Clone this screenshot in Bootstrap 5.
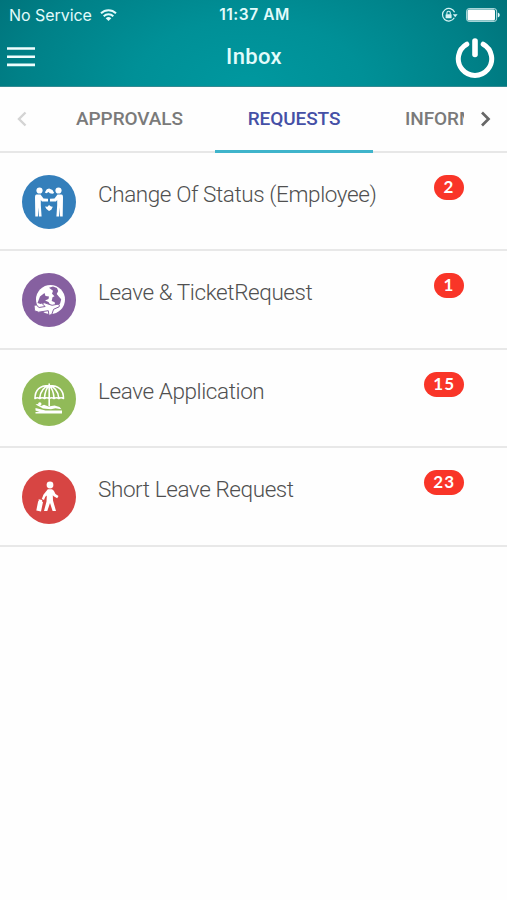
<!DOCTYPE html>
<html lang="en">
<head>
<meta charset="utf-8">
<meta name="viewport" content="width=device-width, initial-scale=1">
<title>Inbox</title>
<link href="https://cdn.jsdelivr.net/npm/bootstrap@5.3.0/dist/css/bootstrap.min.css" rel="stylesheet">
<style>
body{font-family:Roboto,sans-serif;background:#fefefe;overflow:hidden}
svg{display:block;flex:none}
.app-header{height:87px;background:radial-gradient(ellipse 330px 190px at 49% 100%,#00989f 0%,#009097 35%,#008087 70%,#006c74 100%);color:#e2fbfb;border-bottom:1px solid #348a92}
.status-row{height:30px;font:400 16px/30px Inter,sans-serif;padding:0 7px 0 9px}
.status-row>div,.title-row>div{flex:1 1 0}
.carrier{letter-spacing:-.05px}
.clock{font-weight:600;font-size:15.5px;letter-spacing:.55px}
.title-row{height:56px;padding:0 12px 0 13px}
.title-row>div:first-child{margin-left:-6px;margin-right:6px}
.title-row h1{font-size:22px;font-weight:500;line-height:54px;margin:0 0 2px;letter-spacing:.35px}
.tab-strip{height:66px;border-bottom:2px solid #e7e7e7}
.tab-strip .arrow{width:43px}
.tab-strip .nav{flex:1;min-width:0;overflow:hidden;height:66px;margin-left:1px}
.tab-strip .nav-link{font-size:19px;font-weight:500;letter-spacing:-.08px;color:#7a7a7a;line-height:28px;padding:18px 0 17px;border-radius:0;border-bottom:3px solid transparent;height:66px;flex:none;text-align:center}
.tab-strip .nav-link.active{color:#4550a6;border-color:#3fb4cb}
.t1{width:171px}.t2{width:158px}.t3{width:190px;padding-left:32px!important;text-align:left!important}
.request{height:98.4px;border-bottom:2px solid #e8e8e8;padding:22px 43px 0 22px}
.round-icon{width:54px;height:54px}
.label-text{font-weight:300;font-size:22.5px;line-height:28px;color:#505050;margin:5px 0 0 22px;letter-spacing:-.41px}
.count{background:#f93528;font:700 17px/24px Lato,sans-serif;min-width:30px;height:25px;padding:0 9px;border-radius:13px;letter-spacing:1px}
</style>
</head>
<body>
<header class="app-header">
  <div class="status-row d-flex align-items-center">
    <div class="d-flex align-items-center gap-2 text-nowrap"><span class="carrier">No Service</span>
      <svg width="17" height="13" viewBox="0 0 17 13" fill="none" stroke="#e2fbfb" stroke-width="2"><path d="M1 4.300C5.200.2 11.800.2 16 4.300M3.700 7.200C6.300 4.700 10.700 4.700 13.300 7.200"/><path d="M8.500 12L5.700 9.200Q8.500 6.900 11.300 9.200Z" fill="#e2fbfb" stroke="none"/></svg>
    </div>
    <span class="clock">11:37 AM</span>
    <div class="d-flex align-items-center justify-content-end gap-2">
      <svg width="17" height="16" viewBox="0 0 17 16"><path d="M13.300 10.800A6.300 6.300 0 1 1 13.600 5.300" fill="none" stroke="#d5f3f4" stroke-width="1.200"/><path d="M11.800 7.300h4.800l-2.400 3z" fill="#d5f3f4"/><rect x="4.600" y="7.300" width="6" height="4" rx=".5" fill="#d5f3f4"/><path d="M5.900 7.500V6a1.700 1.700 0 0 1 3.400 0v1.500" fill="none" stroke="#d5f3f4" stroke-width="1.100"/></svg>
      <svg width="34" height="14" viewBox="0 0 34 14"><rect x=".6" y=".6" width="30" height="12.800" rx="2.500" fill="none" stroke="#b9e0e2"/><rect x="1.500" y="1.500" width="27.500" height="11" rx="1.500" fill="#fff"/><path d="M31.800 4.500q2 .6 2 2.500t-2 2.500z" fill="#e2fbfb"/></svg>
    </div>
  </div>
  <div class="title-row d-flex align-items-center">
    <div><svg width="28" height="24" viewBox="0 0 28 24" stroke="#effefe" stroke-width="2.600"><path d="M0 2.500h28M0 10.700h28M0 18.900h28"/></svg></div>
    <h1>Inbox</h1>
    <div class="d-flex justify-content-end"><svg width="40" height="43" viewBox="0 0 40 43" fill="none" stroke="#fff" stroke-linecap="round"><path d="M11.800 7.200A16.700 16.700 0 1 0 28.200 7.200" stroke-width="5"/><path d="M20 4v13.500" stroke-width="5.600"/></svg></div>
  </div>
</header>
<nav class="tab-strip d-flex">
  <div class="arrow d-flex align-items-center justify-content-center"><svg width="12" height="16" viewBox="0 0 12 16" fill="none" stroke="#d4d4d4" stroke-width="2.400"><path d="M9.500 1.500L3 8l6.500 6.500"/></svg></div>
  <div class="nav flex-nowrap">
    <a class="nav-link t1" href="#">APPROVALS</a>
    <a class="nav-link t2 active" href="#">REQUESTS</a>
    <a class="nav-link t3" href="#">INFORMATION</a>
  </div>
  <div class="arrow d-flex align-items-center justify-content-center"><svg width="12" height="16" viewBox="0 0 12 16" fill="none" stroke="#676767" stroke-width="2.700"><path d="M2 1.500L8.500 8 2 14.500"/></svg></div>
</nav>
<main>
  <div class="request d-flex align-items-start">
    <svg class="round-icon" viewBox="0 0 54 54"><circle cx="27" cy="27" r="27" fill="#347fbb"/><g fill="#fff"><circle cx="17.500" cy="15.500" r="3.100"/><circle cx="36.500" cy="15.500" r="3.100"/><path d="M14.500 19.500h4l3 4 4.500.3v2.700h-6L18.800 25v5l.8 11.500h-2.700l-.5-9-.5 9H13.300L13 22.500q0-3 1.500-3zM39.500 19.500h-4l-3 4-4.500.3v2.700h6l1.200-1.500v5l-.8 11.500h2.700l.5-9 .5 9h2.600l.3-19q0-3-1.500-3z"/><path d="M22.800 17.500l2-3.300 2.300-.8 3.400 1.600 1.700 3-1.800.7-2.600-.4-1.300-1.300-2 1.300zM23 31.500l2.500.3 1.500-1.800 2 1.500 1.800.3-1.500 3-2.300 1.300-2.500-2z"/></g></svg>
    <div class="label-text text-nowrap">Change Of Status (Employee)</div><span class="badge count ms-auto">2</span>
  </div>
  <div class="request d-flex align-items-start">
    <svg class="round-icon" viewBox="0 0 54 54"><circle cx="27" cy="27" r="27" fill="#8660a0"/><circle cx="28.500" cy="26.500" r="14.500" fill="#fff"/><path d="M27 14.700l4-1.200 4 1.500 1.200 3-1.500 3 2.500 3 2 2.300-1 4-3 4.500-2-1.500-.5-4-3-1.200.8-3.800 2-1-2.500-2.500 1-3z" fill="#8660a0"/><path d="M18 23.500l4.500-3.500 1 3 3.500.5-.5 2.500-3.500 1.500 3.500 1.500 1.500 2.500-7-1.500-2.500 1-3-1z" fill="#8660a0"/><path d="M12 32.300l2.300-.3 2.800 2.500 6-1-3-3 2.500-.7 7.500 2.500 5-1q3.200.2 2 2.500l-5.500 2.500-1.800 5-2.800 1.200-.7-4.800-9.800 1.500-4-1.500z" fill="#fff" stroke="#8660a0" stroke-width="1"/></svg>
    <div class="label-text text-nowrap">Leave &amp; TicketRequest</div><span class="badge count ms-auto">1</span>
  </div>
  <div class="request d-flex align-items-start">
    <svg class="round-icon" viewBox="0 0 54 54"><circle cx="27" cy="27" r="27" fill="#91ba58"/><g fill="none" stroke="#fff" stroke-width="1.600" stroke-linejoin="round"><path d="M13 26.500C13 17 19 13.500 27.200 13.500S41.500 17 41.500 26.500q-2.400-1.500-4.700 0-2.400-1.500-4.800 0-2.400-1.500-4.800 0-2.300-1.500-4.700 0-2.400-1.500-4.800 0-2.300-1.500-4.700 0zM27.200 11.500V34M17.700 26q1-10 9.500-12.500-4.200 4-4.700 12.500M36.800 26q-1-10-9.600-12.500 4.300 4 4.800 12.500"/></g><circle cx="17.800" cy="32" r="1.700" fill="#fff"/><path d="M13.500 32.500l2-.5 3.500 2 3-1.200 4.500 1.700 6-1 5 1.600 2 2.200-6-1-4.500 1-8-.8zM13.500 36l10 2.500H40v3H13.500v-1.500h4l-4-1.500z" fill="#fff"/></svg>
    <div class="label-text text-nowrap">Leave Application</div><span class="badge count ms-auto">15</span>
  </div>
  <div class="request d-flex align-items-start">
    <svg class="round-icon" viewBox="0 0 54 54"><circle cx="27" cy="27" r="27" fill="#d74543"/><g fill="#fff"><circle cx="28" cy="15" r="3.400"/><path d="M25.800 19.300h4q1.500.3 2.300 2l1.400 2.700 3 2-1.300 2.200-3.500-2-.9-1 .2 5.300 3 10.500h-3.400L28 33l-2.700 8h-3.300l2.500-9.500.3-6-1.500 1.200-1.300 3.300-2.200-.9 1.600-4.300z"/><path d="M16.600 29.300l3.600.8-.2 1.500 1 .4-2 9.500-4.700-1 1.900-9.500.6.200z"/></g></svg>
    <div class="label-text text-nowrap">Short Leave Request</div><span class="badge count ms-auto">23</span>
  </div>
</main>
<script src="https://cdn.jsdelivr.net/npm/bootstrap@5.3.0/dist/js/bootstrap.bundle.min.js"></script>
</body>
</html>
